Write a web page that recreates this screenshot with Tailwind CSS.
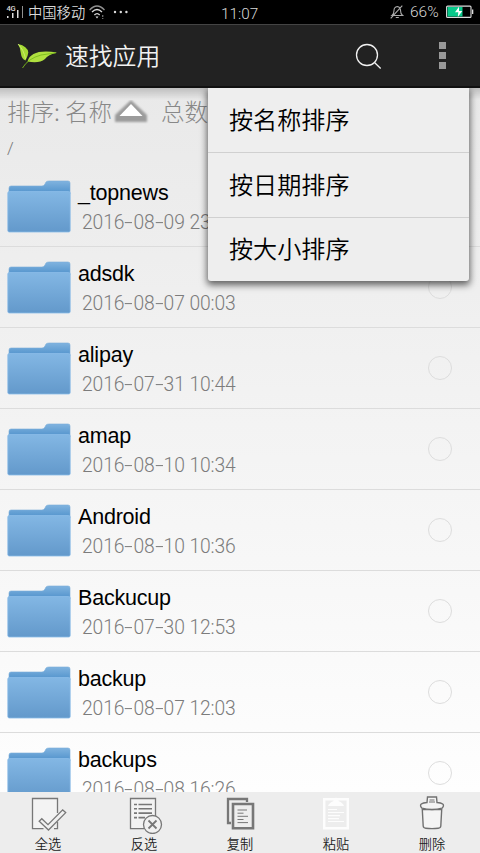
<!DOCTYPE html>
<html lang="zh-CN">
<head>
<meta charset="utf-8">
<meta name="viewport" content="width=device-width">
<title>速找应用</title>
<script src="https://cdn.jsdelivr.net/npm/@tailwindcss/browser@4"></script>
</head>
<body class="relative flex h-[853px] w-[480px] flex-col overflow-hidden bg-black font-['Noto_Sans_CJK_SC',sans-serif] font-[350]">
<svg class="absolute h-0 w-0">
  <defs>
    <linearGradient id="front" x2="0" y2="1"><stop stop-color="#83b7e4"/><stop offset="1" stop-color="#6399cb"/></linearGradient>
    <linearGradient id="back" x2="0" y2="1"><stop stop-color="#80b3df"/><stop offset="1" stop-color="#4f91cb"/></linearGradient>
    <symbol id="folder" viewBox="0 0 64 53">
      <path d="M2 14V8q0-2 2-2h31q2 0 3-2l1-2q1-1 3-1h19q2 0 2 2v11z" fill="url(#back)" stroke="#78acd8" stroke-width=".6"/>
      <rect x=".8" y="11.5" width="62.4" height="40.5" rx="1.5" fill="url(#front)" stroke="#8bbde8" stroke-width=".8"/>
    </symbol>
  </defs>
</svg>

<div class="flex h-6 shrink-0 items-center text-[#d8d8d8]">
  <svg class="ml-[6px] h-5 w-[20px]" viewBox="0 0 20 20" fill="#ddd"><text x="0.5" y="8.5" font-size="7.5" font-family="Roboto" font-weight="500" textLength="9">4G</text><path d="M1 14h1.500v2H1zM6 11h1.500v5H6zM11 8h1.500v8H11z"/><path d="M16 4h1v12h-1z" opacity=".65"/></svg>
  <span class="ml-[2px] w-[58px] text-[14.3px] leading-6 whitespace-nowrap">中国移动</span>
  <svg class="ml-[3px] h-4 w-[17px]" viewBox="0 0 17 16" fill="none" stroke="#ddd" stroke-width="1.3"><path d="M.6 6Q8 -2 15.5 6" opacity=".65"/><path d="M3 8q5-5 10 0M5.4 11q2.7-2.8 5.3 0"/><path d="M6.5 12.5h3L8 14.5z" fill="#ddd" stroke="none"/><path d="M13.7 11v2M13.7 14v1" opacity=".5"/></svg>
  <svg class="ml-[7px] h-2 w-4" viewBox="0 0 16 8" fill="#ddd"><circle cx="2" cy="4" r="1.2"/><circle cx="7.8" cy="4" r="1.2"/><circle cx="13.4" cy="4" r="1.2"/></svg>
  <span class="ml-[92px] w-[41px] pt-[4px] font-['Roboto',sans-serif] text-[15.3px] font-light whitespace-nowrap">11:07</span>
  <svg class="ml-[128px] h-[14px] w-[14px]" viewBox="0 0 14 14" fill="none" stroke="#aaa" stroke-width="1.1"><path d="M2 10.5Q4 9 4 5.5 4 2 7.3 1.5 10.6 2 10.6 6q0 3 2 4.5zM5.8 12.5h3M12.3.6.7 13.4"/></svg>
  <span class="ml-[6px] w-[29px] pt-[2px] font-['Roboto',sans-serif] text-[15.5px] font-light whitespace-nowrap">66%</span>
  <svg class="ml-[7px] h-[14px] w-[28px]" viewBox="0 0 28 14"><rect x=".6" y="1.1" width="24.4" height="11.3" rx="1" fill="none" stroke="#ddd" stroke-width="1.1"/><path d="M1.5 2h15v9.5h-15z" fill="#08c88a"/><path d="M26 4.5h1.3v4.4H26z" fill="#ddd"/><path d="m13 1.8-4 5.5h3.3l-.5 4.6 4.5-6H13z" fill="#fff"/></svg>
</div>

<header class="flex h-[64px] shrink-0 items-center border-t border-b-2 border-t-[#444] border-b-[#111] bg-[#222]">
  <svg class="ml-[17px] h-[26px] w-[42px]" viewBox="0 0 42 26"><path d="M1 1Q10.500 3 11.300 9.500 11 13 8.500 17.500 4.500 16 3.800 10 3.500 5 1 1z" fill="#a6db34"/><path d="M1 1q6 6 7.500 15" stroke="#d4f078" fill="none" stroke-width=".8"/><path d="M10.500 18.500Q14 5.500 40 9.500 31 11.500 28 16q-6 5-17.500 2.500z" fill="#b0e03f"/><path d="M5.500 25Q11 15.500 24 12L39 9.800" stroke="#7cbb1c" stroke-width=".9" fill="none"/></svg>
  <h1 class="-mt-[2px] ml-[6px] w-[96px] text-[23.8px] leading-[40px] whitespace-nowrap text-[#f2f2f2]">速找应用</h1>
  <svg class="ml-[193px] h-[28px] w-[28px]" viewBox="0 0 28 28" fill="none" stroke="#f2f2f2" stroke-width="1.3"><circle cx="13" cy="13" r="10.5"/><path d="m20.5 20.5 6.2 6"/></svg>
  <div class="ml-[57px] grid gap-[3px]"><i class="h-[7px] w-[7px] bg-[#999]"></i><i class="h-[7px] w-[7px] bg-[#999]"></i><i class="h-[7px] w-[7px] bg-[#999]"></i></div>
</header>

<main class="min-h-0 flex-1 overflow-hidden bg-linear-to-b from-[#e9e9e9] to-[#fefefe]">
  <div class="h-[78px] bg-[linear-gradient(to_bottom,#0000002e,#00000000_12px)] text-[#999]">
    <div class="flex h-[48px] items-center pl-[7px] text-[23.5px] whitespace-nowrap">
      <span class="w-[106px] font-light text-[#888]">排序: 名称</span>
      <svg class="h-[24px] w-[36px]" viewBox="0 0 36 24"><defs><filter id="soft"><feGaussianBlur stdDeviation="1.2"/></filter></defs><path d="M18 0 34 15v7H2v-7z" fill="#9b9b9b" filter="url(#soft)"/><path d="M18 4 29.500 16h-23z" fill="#fff"/></svg>
      <span class="ml-[12px] font-light text-[#888]">总数</span>
    </div>
    <div class="pl-[7px] font-['Roboto',sans-serif] text-[17px] leading-6 text-[#777]">/</div>
  </div>
  <div id="files"></div>
</main>

<nav class="grid h-[61px] shrink-0 grid-cols-5 bg-[#ededed] text-center text-[13.2px] leading-[20px] text-[#222]">
  <div class="flex flex-col items-center pt-[3px]"><svg class="h-[39px] w-[40px]" viewBox="0 0 40 39" fill="none" stroke="#777" stroke-width="1.3"><path d="M29.5 18V3.5h-25v30.2h11M26 33.7h3.5v-7" fill="#f3f3f3"/><path d="m11.2 26.2 2.6-2.5 6.2 6 14.7-14.8 3 2.7L20.5 35z" fill="#f1f1f1"/></svg><span>全选</span></div>
  <div class="flex flex-col items-center pt-[3px]"><svg class="h-[39px] w-[40px]" viewBox="0 0 40 39" fill="none" stroke="#777" stroke-width="1.3"><path d="M20 33.7H6.5V3.5h25V22" fill="#f3f3f3"/><path d="M10 9.5h3m1.5 0H28M10 13.7h3m1.5 0H28M10 18.1h3m1.5 0H28M10 22.6h3m1.5 0H21" stroke-width="1.6"/><circle cx="28.5" cy="29.5" r="9" fill="#f1f1f1"/><path d="m24.5 25.5 8 8m0-8-8 8" stroke-width="1.8"/></svg><span>反选</span></div>
  <div class="flex flex-col items-center pt-[3px]"><svg class="h-[39px] w-[40px]" viewBox="0 0 40 39" fill="none" stroke="#777" stroke-width="2.3"><path d="M11 28H8V4h19v3"/><path d="M13 9h20v24.2H13z" fill="#eee" stroke-width="2.6"/><path d="M17.5 15H27M17.5 18.2h6M17.5 21.3H28M17.5 24.5h6M17.5 27.6H28" stroke-width="1"/></svg><span>复制</span></div>
  <div class="flex flex-col items-center pt-[3px]"><svg class="h-[39px] w-[40px]" viewBox="0 0 40 39" fill="none" stroke="#fdfdfd"><path d="M8.2 4.2h23.6v29H8.2z" stroke-width="2.5"/><path d="M12 11q1-3 5.5-5a2.6 2.6 0 1 1 5 0Q27 8 28 11z" fill="#fdfdfd" stroke="none"/><path d="M12 14.5h9M12 17.5h16M12 20.6h12M12 23.6h11M12 26.5h16" stroke-width="1.1"/></svg><span>粘贴</span></div>
  <div class="flex flex-col items-center pt-[3px]"><svg class="h-[39px] w-[40px]" viewBox="0 0 40 39" fill="#f4f4f4" stroke="#707070" stroke-width="1.4"><path d="M10.300 14.500h19.400l-.9 16.500q-.2 2-2.600 2.300-6.200.7-12.400 0-2.400-.3-2.600-2.300z"/><path d="M10 13.200Q7.500 10.500 9.300 9q1.700-1.200 5.700-1.500l.5-5.500h9l.5 5.500q4 .3 5.700 1.500 1.800 1.500-.7 4.200-4.500 1.300-10 1.300T10 13.200z"/><path d="M17 7h6M17.500 5h5" stroke-width="1"/></svg><span>删除</span></div>
</nav>

<div class="absolute top-[88px] left-[208px] w-[261px] rounded-b-[3px] bg-[#eee] text-[24.1px] text-black shadow-[0_3px_7px_1px_#00000099] [clip-path:inset(0_-12px_-14px_-12px)]">
  <div class="flex h-[65px] items-center border-b border-[#d0d0d0] pb-[2px] pl-[21px]">按名称排序</div>
  <div class="flex h-[65px] items-center border-b border-[#d0d0d0] pb-[2px] pl-[21px]">按日期排序</div>
  <div class="flex h-[63px] items-center pb-[2px] pl-[21px]">按大小排序</div>
</div>

<script>
const files = [
  ["_topnews", "2016-08-09 23"], ["adsdk", "2016-08-07 00:03"], ["alipay", "2016-07-31 10:44"],
  ["amap", "2016-08-10 10:34"], ["Android", "2016-08-10 10:36"], ["Backucup", "2016-07-30 12:53"],
  ["backup", "2016-08-07 12:03"], ["backups", "2016-08-08 16:26"]
];
document.getElementById("files").innerHTML = files.map(([name, date]) => `
  <div class="flex h-[81px] items-start border-b border-[#dcdcdc] pt-[14px]">
    <svg class="ml-[7px] h-[53px] w-[64px] shrink-0"><use href="#folder"/></svg>
    <div class="-mt-px ml-[7px] w-[349px]">
      <div class="h-[28px] font-['Liberation_Sans',sans-serif] text-[21.5px] leading-[28px] font-normal tracking-[-0.2px] text-black">${name}</div>
      <div class="pt-px pl-[4px] font-['Roboto',sans-serif] text-[19.3px] leading-[30px] font-light tracking-[-0.1px] whitespace-nowrap text-[#7c7c7c]">${date.replace(/-/g, '<span class="inline-block w-[9px] origin-left scale-x-160">-</span>')}</div>
    </div>
    <i class="mt-[14px] ml-[1px] h-[24px] w-[24px] rounded-full border border-[#ddd]"></i>
  </div>`).join("");
</script>
</body>
</html>
